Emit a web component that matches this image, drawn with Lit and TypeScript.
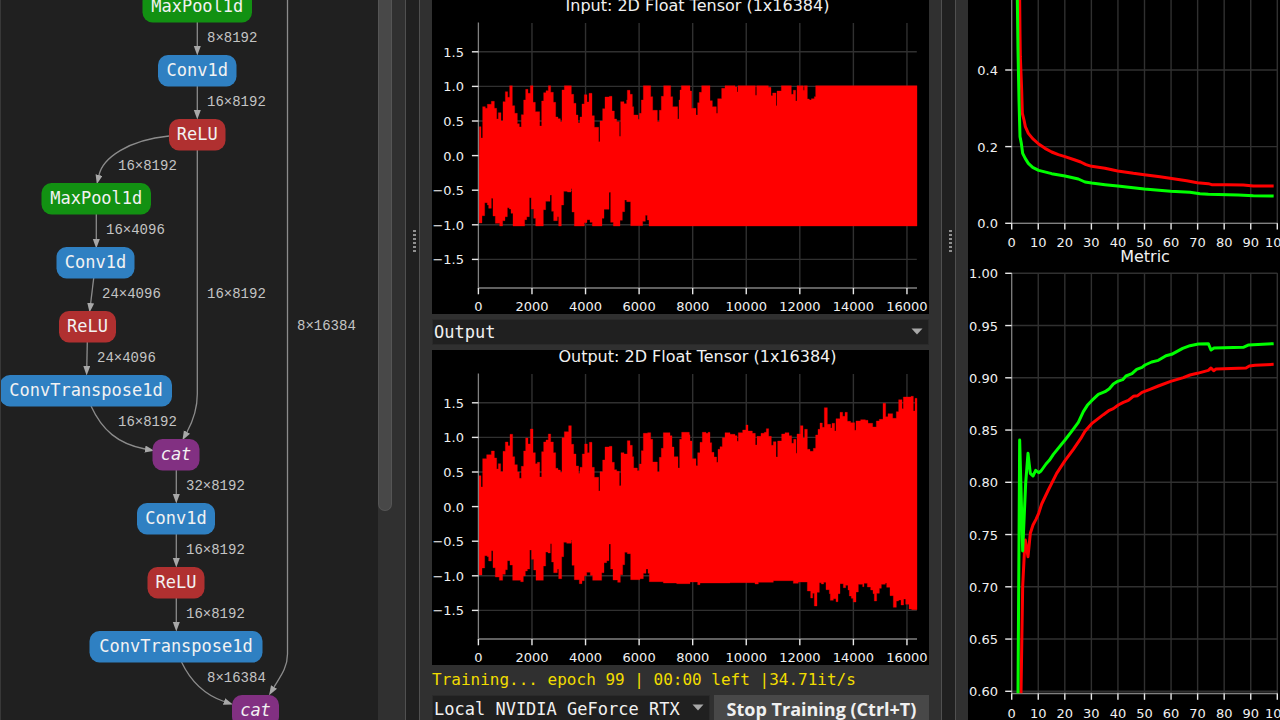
import { LitElement, html, svg, css } from "lit";
import { customElement, property } from "lit/decorators.js";

type Pt = [number, number];

const parse = (s: string): Pt[] =>
  s.trim().split(/\s*;\s*/).filter(Boolean).map((p) => p.split(" ").map(Number) as Pt);

const line = (pts: Pt[]) => "M" + pts.map((p) => p.join(",")).join("L");

/** Staircase envelope, returned as a list of corner points up to `end`. */
const stairs = (pts: Pt[], end: number): Pt[] => {
  const out: Pt[] = [];
  pts.forEach(([x, y], i) => {
    out.push([x, y], [i + 1 < pts.length ? pts[i + 1][0] : end, y]);
  });
  return out;
};

const envelope = (hi: string, lo: string) =>
  line([...stairs(parse(hi), 1461), ...stairs(parse(lo), 1461).reverse()]) + "Z";

/* Envelopes are stored in thirds of a chart unit. */
const INPUT_HI = `148 380;153 414;158 320;166 325;172 313;184 304;193 325;200 357;205 338;213 363;219 305;226 275;233 292;239 257;247 317;254 340;262 371;268 381;274 344;281 300;287 268;294 280;301 257;309 307;316 335;329 378;335 303;341 278;348 272;355 257;362 277;370 307;377 351;384 356;391 365;396 270;403 257;424 283;431 310;438 345;444 368;450 351;456 312;463 284;471 306;477 280;486 347;493 382;506 425;510 363;518 326;525 291;538 289;546 333;553 357;560 365;568 409;572 305;582 311;590 300;592 271;600 283;607 320;611 345;624 358;628 340;634 300;640 257;662 290;668 331;682 365;688 331;694 289;701 257;722 290;728 320;743 357;747 300;750 270;754 257;780 273;785 325;798 345;803 308;808 277;815 257;840 302;847 320;859 340;863 296;875 265;885 257;915 261;921 276;924 257;976 286;980 257;1015 262;1023 287;1028 279;1038 317;1041 273;1054 257;1084 283;1090 271;1097 303;1101 257;1120 271;1123 257;1132 297;1138 300;1144 296;1153 290;1157 257`;
const INPUT_LO = `146 669;156 647;164 608;172 615;176 625;184 595;189 648;196 670;209 678;218 662;225 650;232 623;238 627;243 640;249 678;284 659;290 650;298 593;304 627;311 655;317 678;340 629;347 604;360 585;365 634;371 662;382 650;386 678;394 615;401 574;412 576;423 566;426 636;433 678;463 668;471 659;480 667;487 678;516 655;522 628;537 577;542 667;550 678;570 661;577 635;584 600;590 605;602 677;638 664;646 646;652 660;657 678`;
const OUTPUT_HI = `147 497;153 531;158 446;170 434;184 423;193 444;200 477;205 461;212 485;219 424;226 396;234 407;240 373;248 440;254 464;262 486;268 505;274 469;281 423;287 384;294 402;301 357;309 428;316 461;322 457;329 501;335 425;341 396;348 390;355 372;362 396;370 428;377 475;384 480;391 487;396 383;403 365;416 347;424 403;431 432;438 468;446 490;450 472;457 432;464 402;472 428;478 397;486 472;493 502;506 543;510 485;518 450;525 411;538 409;546 457;553 479;560 484;568 527;573 428;582 432;592 392;600 406;607 440;611 474;622 482;628 462;634 422;640 370;653 368;662 388;668 456;682 486;688 442;694 415;700 368;720 377;726 411;732 440;744 474;749 388;755 367;778 374;780 393;786 446;798 467;803 428;810 397;817 367;828 370;834 367;840 398;845 427;852 441;860 457;864 418;870 410;877 383;885 368;900 373;915 377;921 394;925 368;938 360;948 345;954 363;967 370;976 405;981 379;993 370;1003 367;1009 356;1016 379;1024 406;1030 395;1038 441;1043 393;1055 372;1065 368;1077 377;1085 400;1091 388;1098 430;1101 372;1111 347;1119 384;1124 358;1132 418;1140 424;1150 415;1157 375;1164 358;1170 339;1177 352;1183 293;1192 343;1202 354;1206 340;1214 363;1218 326;1230 307;1238 319;1245 307;1252 334;1262 338;1274 361;1278 333;1292 329;1306 331;1314 340;1328 351;1339 333;1348 328;1359 280;1367 320;1374 311;1388 325;1399 305;1406 269;1416 296;1420 261;1443 259;1450 303;1455 265`;
const OUTPUT_LO = `147 795;156 774;164 737;172 740;176 753;184 722;189 773;196 801;208 811;218 793;226 779;232 752;240 765;248 811;272 815;280 798;286 783;292 777;299 720;305 748;311 780;318 811;340 768;347 726;354 729;361 701;365 756;371 788;382 777;386 806;395 740;401 697;410 700;424 690;426 766;433 809;448 821;456 812;463 797;470 787;481 796;488 811;515 788;522 758;530 752;537 702;542 777;549 810;563 817;571 794;578 764;584 727;592 731;602 809;630 806;640 790;648 777;654 790;658 815;700 819;740 821;780 816;803 824;810 819;900 818;975 822;985 817;1030 812;1065 812;1090 820;1105 816;1132 843;1142 864;1148 850;1153 888;1161 847;1168 818;1174 822;1181 817;1188 839;1198 851;1201 871;1210 866;1218 875;1224 851;1230 821;1240 833;1247 826;1254 840;1258 858;1264 865;1270 876;1278 846;1285 823;1298 830;1302 820;1312 831;1322 840;1329 851;1333 873;1340 850;1348 835;1354 823;1366 819;1370 832;1380 857;1390 892;1399 873;1406 870;1413 885;1421 867;1427 883;1437 897;1445 899`;

const LOSS_RED = `179 0;180 100;181 170;183 220;185 270;187 340;192 360;196 380;205 400;218 416;236 432;255 445;275 456;295 464;315 470;345 480;362 486;378 494;395 499;435 505;473 513;520 520;553 524;600 530;640 536;680 542;712 548;745 551;755 554;800 554;850 555;880 558;941 558`;
const LOSS_GREEN = `172 0;174 150;177 300;180 410;184 430;188 460;196 476;205 490;218 502;236 511;275 521;315 528;355 537;375 546;395 549;435 554;473 558;553 567;632 574;690 577;720 581;745 583;835 585;880 587;941 588`;
const METRIC_RED = `183 1330;188 1010;193 910;196 870;204 920;211 850;219 825;228 808;236 790;245 762;265 720;290 670;315 632;340 598;362 566;375 544;395 521;430 494;448 481;460 476;475 465;490 457;505 451;520 439;533 437;546 427;570 418;595 408;632 394;670 383;690 375;712 370;745 361;753 354;761 362;768 357;858 354;868 348;885 346;941 343`;
const METRIC_GREEN = `174 1330;179 570;188 903;197 700;204 610;211 670;219 678;227 661;236 668;243 663;258 642;268 631;280 613;315 570;335 544;355 517;370 485;382 466;395 452;415 433;435 425;448 416;460 402;473 394;488 389;498 378;516 371;530 358;546 352;555 345;575 336;595 331;618 317;635 313;668 295;690 287;715 282;745 281;753 300;762 294;850 292;866 285;941 281`;

const chartStyles = css`
  :host { display: block; background: #000; }
  svg { display: block; width: 100%; height: auto; }
  text { font-family: "DejaVu Sans", sans-serif; fill: #f0f0f0; }
  .title { font-size: 16px; text-anchor: middle; }
  .tick { font-size: 13px; }
  .xt { text-anchor: middle; }
  .yt { text-anchor: end; }
  .grid { stroke: #303030; stroke-width: 1.4; fill: none; }
  .axis { stroke: #808080; stroke-width: 1.3; fill: none; }
  .mark { stroke: #e8e8e8; stroke-width: 1.4; fill: none; }
  .wave { fill: #f00; stroke: #f00; stroke-width: 1; stroke-linejoin: round; }
  .curve { fill: none; stroke-width: 9; stroke-linejoin: round; }
  .red { stroke: #f00; }
  .green { stroke: #0f0; }
`;

@customElement("tensor-chart")
class TensorChart extends LitElement {
  static styles = chartStyles;
  @property() title = "";
  @property() hi = "";
  @property() lo = "";
  @property({ type: Number }) shift = 0;

  render() {
    const xs = [0, 1, 2, 3, 4, 5, 6, 7, 8].map((i) => ({ x: 46.4 + i * 53.57, label: String(i * 2000) }));
    const ys = [1.5, 1, 0.5, 0, -0.5, -1, -1.5].map((v) => ({
      y: 156.6 - v * 69.2,
      label: v.toFixed(1).replace("-", "−"),
    }));
    return html`<svg viewBox="0 0 497 315" role="img" aria-label=${this.title}>
      ${xs.slice(1).map((t) => svg`<path class="grid" d="M${t.x},24V289"/>`)}
      ${ys.map((t) => svg`<path class="grid" d="M46.4,${t.y}H484.8"/>`)}
      <g transform=${`translate(-2,${this.shift}) scale(.33333)`}>
        <path class="wave" d=${envelope(this.hi, this.lo)}></path>
      </g>
      <path class="axis" d="M46.4,23.5V289H485"></path>
      ${xs.map((t) => svg`<path class="mark" d="M${t.x},289v6.3"/><text class="tick xt" x=${t.x} y="312">${t.label}</text>`)}
      ${ys.map((t) => svg`<path class="mark" d="M46.4,${t.y}h-6.5"/><text class="tick yt" x="32" y=${t.y + 5}>${t.label}</text>`)}
      <text class="title" x="265.5" y="12">${this.title}</text>
    </svg>`;
  }
}

@customElement("history-chart")
class HistoryChart extends LitElement {
  static styles = chartStyles;
  @property() title = "";
  @property() red = "";
  @property() green = "";
  @property({ type: Number }) height = 0;
  @property({ type: Number }) top = 0;
  @property({ type: Number }) bottom = 0;
  @property({ type: Array }) ticks: [number, string][] = [];

  render() {
    const xs = Array.from({ length: 11 }, (_, i) => ({ x: 43.7 + i * 26.56, label: String(i * 10) }));
    return html`<svg viewBox=${`0 0 312 ${this.height}`} role="img" aria-label=${this.title || "Loss"}>
      ${xs.slice(1).map((t) => svg`<path class="grid" d="M${t.x},${this.top}V${this.bottom}"/>`)}
      ${this.ticks.map(([y]) => svg`<path class="grid" d="M43.7,${y}H309.3"/>`)}
      <path class="axis" d=${`M43.7,${this.top}V${this.bottom}H309.7`}></path>
      ${xs.map((t) => svg`<path class="mark" d="M${t.x},${this.bottom}v6.3"/><text class="tick xt" x=${t.x} y=${this.bottom + 24}>${t.label}</text>`)}
      ${this.ticks.map(([y, l]) => svg`<path class="mark" d="M43.7,${y}h-6.5"/><text class="tick yt" x="30" y=${y + 5}>${l}</text>`)}
      <g transform="translate(-8,0) scale(.33333)">
        <path class="curve red" d=${line(parse(this.red))}></path>
        <path class="curve green" d=${line(parse(this.green))}></path>
      </g>
      ${this.title ? svg`<text class="title" x="177" y="12">${this.title}</text>` : ""}
    </svg>`;
  }
}

type Kind = "pool" | "conv" | "relu" | "cat";
/* kind, label, left, top, width */
const NODES: [Kind, string, number, number, number][] = [
  ["pool", "MaxPool1d", 142.5, -9, 109.5],
  ["conv", "Conv1d", 158, 55, 78.5],
  ["relu", "ReLU", 169, 119, 56.5],
  ["pool", "MaxPool1d", 41.5, 183, 109.5],
  ["conv", "Conv1d", 56.5, 247, 78],
  ["relu", "ReLU", 59, 311, 57],
  ["conv", "ConvTranspose1d", 0, 375, 172],
  ["cat", "cat", 152.5, 439, 47],
  ["conv", "Conv1d", 137, 503, 78],
  ["relu", "ReLU", 147.5, 567, 57],
  ["conv", "ConvTranspose1d", 89.5, 631, 173],
  ["cat", "cat", 232, 695, 47],
];
const EDGES = [
  "M197.3,22V46", "M197.3,86V110",
  "M169,136C128,140 103,158 99,175",
  "M197.3,150V394C197.3,408 193,421 187,432",
  "M96.3,214V239", "M93.7,278L90.7,303", "M87.3,342L86.8,366",
  "M91,406C102,430 118,444 145,449",
  "M176.3,470V494", "M176.3,534V558", "M176.3,598V622",
  "M181.5,662C191,682 205,695 224,701.5",
  "M287.5,0V654C287.5,668 280,677 274,687",
];
const LABELS: [number, number, string][] = [
  [207, 42, "8×8192"], [207, 106, "16×8192"], [118, 170, "16×8192"], [106, 234, "16×4096"],
  [102, 298, "24×4096"], [207, 298, "16×8192"], [297, 330, "8×16384"], [97, 362, "24×4096"],
  [118, 426, "16×8192"], [186, 490, "32×8192"], [186, 554, "16×8192"], [186, 618, "16×8192"],
  [207, 682, "8×16384"],
];

@customElement("model-graph")
class ModelGraph extends LitElement {
  static styles = css`
    :host { display: block; min-width: 0; background: #202020; border-left: 1px solid #383838; box-sizing: border-box; overflow: hidden; }
    svg { display: block; width: 100%; height: 100%; }
    text { font-family: "DejaVu Sans Mono", monospace; }
    .edge { fill: none; stroke: #8c8c8c; stroke-width: 1.3; }
    .head { fill: #a8a8a8; }
    .label { font-size: 14px; fill: #c4c4c4; font-family: "Liberation Mono", monospace; }
    .name { font-size: 17px; fill: #f2f2f2; text-anchor: middle; }
    .pool { fill: #129112; }
    .conv { fill: #2f80c2; }
    .relu { fill: #b03030; }
    .cat { fill: #823082; }
    text.name { fill: #f2f2f2; }
    .slanted { font-style: italic; }
  `;
  render() {
    return html`<svg role="img" aria-label="Model graph">
      <defs>
        <marker id="head" markerWidth="10" markerHeight="8" refX="0" refY="3.5" orient="auto" markerUnits="userSpaceOnUse">
          <path class="head" d="M0,0L9.5,3.5L0,7Z"></path>
        </marker>
      </defs>
      <g transform="translate(-1,0)">
        ${EDGES.map((d) => svg`<path class="edge" d=${d} marker-end="url(#head)"/>`)}
        ${NODES.map(([k, n, x, y, w]) => svg`
          <rect class=${k} x=${x} y=${y} width=${w} height="31.5" rx="10"/>
          <text class=${k === "cat" ? "name slanted" : "name"} x=${x + w / 2} y=${y + 21}>${n}</text>`)}
        ${LABELS.map(([x, y, t]) => svg`<text class="label" x=${x} y=${y}>${t}</text>`)}
      </g>
    </svg>`;
  }
}

@customElement("app-root")
class AppRoot extends LitElement {
  static styles = css`
    :host { display: block; height: 100vh; overflow: hidden; background: #303030; color: #f0f0f0; }
    * { box-sizing: border-box; }
    .app { display: grid; grid-template-columns: minmax(0, 406fr) 14px minmax(0, 522fr) 14px minmax(0, 324fr); grid-template-rows: minmax(0, 1fr); height: 100%; }
    .left { display: flex; min-width: 0; border-right: 1px solid #505050; padding-right: 13px; }
    .left model-graph { flex: 1; }
    .track { width: 14px; background: #303030; }
    .thumb { height: 71%; background: #484848; border: 1px solid #555; border-top: 0; border-radius: 0 0 7px 7px; }
    .splitter { background: #202020; border-right: 1px solid #505050; display: flex; flex-direction: column; align-items: center; justify-content: center; gap: 2px; padding: 0 0 238px 3px; }
    .dot { width: 3px; height: 2px; background: #909090; flex: none; }
    .middle { min-width: 0; padding: 0 12px; border-right: 1px solid #505050; }
    .column { display: flex; flex-direction: column; gap: 5px; margin-top: -1px; }
    .picker { position: relative; display: flex; min-width: 0; }
    select { appearance: none; width: 100%; min-width: 0; height: 26px; margin: 0; padding: 0 24px 0 1px; border: 1px solid #2a2a2a; border-radius: 0; background: #202020; color: #f0f0f0; font: 17px "DejaVu Sans Mono", monospace; }
    .arrow { position: absolute; right: 6px; top: 9px; width: 12px; height: 7px; fill: #a8a8a8; pointer-events: none; }
    .status { height: 20px; margin: 0; font: 16px/20px "DejaVu Sans Mono", monospace; color: #f0dc00; white-space: pre; overflow: hidden; }
    .actions { display: grid; grid-template-columns: minmax(0, 278fr) minmax(0, 215fr); gap: 4px; }
    button { height: 28px; margin: 0; padding: 0; border: 0; background: #484848; color: #f0f0f0; font: bold 18px/28px "Open Sans", sans-serif; white-space: nowrap; }
    .actions select { height: 28px; }
    .right { min-width: 0; padding-left: 12px; overflow: hidden; }
    .plots { background: #000; height: 100%; }
  `;
  private dots() {
    return [0, 1, 2, 3, 4, 5].map(() => html`<span class="dot"></span>`);
  }
  private arrow() {
    return html`<svg class="arrow" viewBox="0 0 12 7" aria-hidden="true"><path d="M0.5,0.5H11.5L6,6.5Z"></path></svg>`;
  }
  render() {
    const metric = ["1.00", "0.95", "0.90", "0.85", "0.80", "0.75", "0.70", "0.65", "0.60"].map((l, i) => [23.3 + i * 52.25, l]);
    return html`<main class="app">
      <section class="left">
        <model-graph></model-graph>
        <div class="track"><div class="thumb"></div></div>
      </section>
      <div class="splitter">${this.dots()}</div>
      <section class="middle">
        <div class="column">
          <tensor-chart .title=${"Input: 2D Float Tensor (1x16384)"} .hi=${INPUT_HI} .lo=${INPUT_LO} .shift=${1}></tensor-chart>
          <div class="picker">
            <select aria-label="Tensor"><option>Output</option></select>${this.arrow()}
          </div>
          <tensor-chart .title=${"Output: 2D Float Tensor (1x16384)"} .hi=${OUTPUT_HI} .lo=${OUTPUT_LO} .shift=${-40}></tensor-chart>
          <p class="status">Training... epoch 99 | 00:00 left |34.71it/s</p>
          <div class="actions">
            <div class="picker">
              <select aria-label="Device"><option>Local NVIDIA GeForce RTX</option></select>${this.arrow()}
            </div>
            <button type="button">Stop Training (Ctrl+T)</button>
          </div>
        </div>
      </section>
      <div class="splitter">${this.dots()}</div>
      <section class="right">
        <div class="plots">
          <history-chart .red=${LOSS_RED} .green=${LOSS_GREEN} .height=${250} .top=${0} .bottom=${223.3}
            .ticks=${[[70, "0.4"], [146.6, "0.2"], [223.3, "0.0"]]}></history-chart>
          <history-chart .title=${"Metric"} .red=${METRIC_RED} .green=${METRIC_GREEN} .height=${470} .top=${23} .bottom=${443.5}
            .ticks=${metric}></history-chart>
        </div>
      </section>
    </main>`;
  }
}
